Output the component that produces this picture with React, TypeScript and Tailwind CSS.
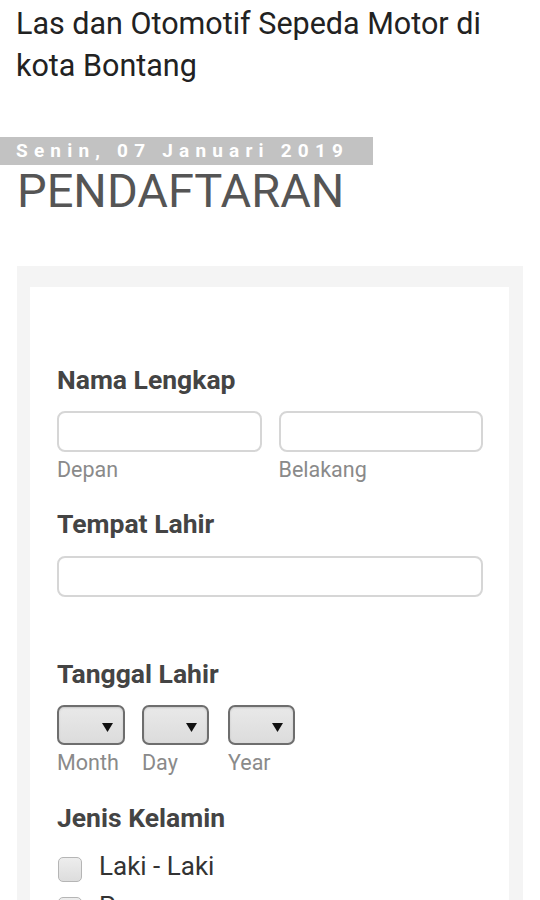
import React from "react";

function Label({ children }: { children: React.ReactNode }) {
  return (
    <div className="text-[26.5px] leading-[30px] font-bold text-[#444]">{children}</div>
  );
}

function Sub({ children, className = "" }: { children: React.ReactNode; className?: string }) {
  return (
    <div className={"text-[21.5px] leading-[24px] text-[#8a8a8a] " + className}>{children}</div>
  );
}

function SelectBox({ w }: { w: string }) {
  return (
    <div
      className={
        "relative h-[40px] rounded-[7px] border-2 border-[#6e6e6e] bg-gradient-to-b from-[#e9e9e9] to-[#dcdcdc] shadow-[inset_0_1px_2px_rgba(0,0,0,0.15)] " +
        w
      }
    >
      <svg
        className="absolute right-[10px] top-[16px]"
        width="11"
        height="9"
        viewBox="0 0 11 9"
      >
        <path d="M0 0 L11 0 L5.5 9 Z" fill="#111" />
      </svg>
    </div>
  );
}

function Check({ label }: { label: string }) {
  return (
    <div className="flex items-center h-[40px]">
      <div className="w-[24px] h-[25px] ml-[1px] mt-[6px] rounded-[5px] border border-[#b5b5b5] bg-gradient-to-b from-[#ededed] to-[#dddddd]" />
      <div className="ml-[17px] text-[26px] leading-[30px] text-[#333]">{label}</div>
    </div>
  );
}

export default function App() {
  return (
    <div
      className="bg-white w-[540px] min-h-[900px]"
      style={{ fontFamily: "Roboto, 'Liberation Sans', Arial, sans-serif" }}
    >
      <div className="pt-[3px] pl-[16px] pr-[16px] text-[30.5px] leading-[42px] text-[#222]">
        Las dan Otomotif Sepeda Motor di kota Bontang
      </div>

      <div className="mt-[50px] w-[373px] h-[28px] bg-[#c2c2c2] pl-[16px] text-[19px] leading-[28px] font-bold text-white tracking-[6.2px] whitespace-nowrap">
        Senin, 07 Januari 2019
      </div>

      <div className="mt-[2px] pl-[17px] text-[47px] leading-none text-[#555]">PENDAFTARAN</div>

      <div className="mt-[52px] ml-[17px] w-[506px] bg-[#f4f4f4] pt-[21px] pl-[13px] pr-[14px]">
        <div className="bg-white pt-[78px] pl-[27px] pr-[26px] pb-[40px]">
          <Label>Nama Lengkap</Label>
          <div className="mt-[16px] flex gap-[17px]">
            <div className="flex-1">
              <div className="h-[41px] rounded-[8px] border-2 border-[#d6d6d6] bg-white" />
              <Sub className="mt-[6px]">Depan</Sub>
            </div>
            <div className="flex-1">
              <div className="h-[41px] rounded-[8px] border-2 border-[#d6d6d6] bg-white" />
              <Sub className="mt-[6px]">Belakang</Sub>
            </div>
          </div>

          <div className="mt-[27px]">
            <Label>Tempat Lahir</Label>
          </div>
          <div className="mt-[17px] h-[41px] rounded-[8px] border-2 border-[#d6d6d6] bg-white" />

          <div className="mt-[62px]">
            <Label>Tanggal Lahir</Label>
          </div>
          <div className="mt-[16px] flex">
            <div className="w-[68px]">
              <SelectBox w="w-[68px]" />
              <Sub className="mt-[6px]">Month</Sub>
            </div>
            <div className="ml-[17px] w-[67px]">
              <SelectBox w="w-[67px]" />
              <Sub className="mt-[6px]">Day</Sub>
            </div>
            <div className="ml-[19px] w-[67px]">
              <SelectBox w="w-[67px]" />
              <Sub className="mt-[6px]">Year</Sub>
            </div>
          </div>

          <div className="mt-[28px]">
            <Label>Jenis Kelamin</Label>
          </div>
          <div className="mt-[13px]">
            <Check label="Laki - Laki" />
            <Check label="Perempuan" />
          </div>
        </div>
      </div>
    </div>
  );
}
